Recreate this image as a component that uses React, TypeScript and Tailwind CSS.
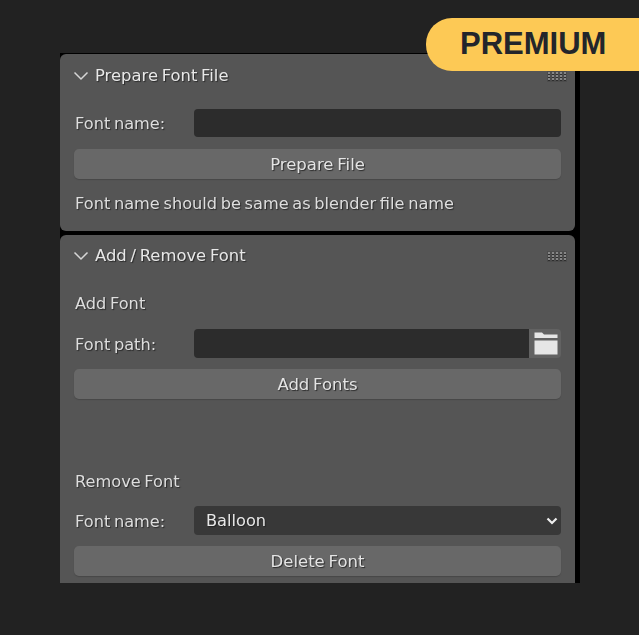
import React from "react";

const font = { fontFamily: '"DejaVu Sans", sans-serif' };

function Grip() {
  return (
    <svg width="20" height="11" viewBox="0 0 20 11" className="shrink-0">
      <rect x="0" y="0" width="20" height="11" fill="#4c4c4c" />
      {[0, 1, 2].map((r) =>
        [0, 1, 2, 3, 4].map((c) => (
          <g key={`${r}-${c}`}>
            <rect x={c * 4 + 1} y={r * 3 + 1} width="2" height="2" fill="#868686" />
            <rect x={c * 4 + 1} y={r * 3 + 3} width="2" height="1" fill="#2e2e2e" />
          </g>
        ))
      )}
    </svg>
  );
}

function Header({ title }: { title: string }) {
  return (
    <div className="-ml-[1px] -mr-[6px] flex h-[20px] items-center">
      <svg width="16" height="10" viewBox="0 0 16 10" className="mr-[6px] shrink-0" fill="none">
        <path d="M1.5 1.5 L8 8 L14.5 1.5" stroke="#d6d6d6" strokeWidth="1.5" />
      </svg>
      <span className="flex-1 text-[16.4px] leading-[20px] text-[#e8e8e8] [word-spacing:-1.5px] [text-shadow:1px_1px_1px_#2a2a2a]">{title}</span>
      <Grip />
    </div>
  );
}

function Label({ children }: { children: React.ReactNode }) {
  return <span className="ml-[1px] w-[119px] shrink-0 pt-[2px] text-[16.2px] leading-[20px] text-[#dedede] [word-spacing:-1.5px] [text-shadow:1px_1px_1px_#2a2a2a]">{children}</span>;
}

function Text({ children, className }: { children: React.ReactNode; className: string }) {
  return <div className={`ml-[1px] text-[16.2px] leading-[20px] text-[#dedede] [word-spacing:-1.5px] [text-shadow:1px_1px_1px_#2a2a2a] ${className}`}>{children}</div>;
}

function Btn({ children }: { children: React.ReactNode }) {
  return (
    <div className="flex h-[30px] items-center justify-center rounded-[5px] bg-[#686868] pt-[3px] text-[16.5px] text-[#e4e4e4] shadow-[0_1px_1px_#484848] [word-spacing:-1.5px] [text-shadow:1px_1px_1px_#2a2a2a]">
      {children}
    </div>
  );
}

export default function App() {
  return (
    <div style={font} className="relative h-[635px] w-[639px] overflow-hidden bg-[#222222] pl-[60px] pt-[53px]">
      <div className="flex h-[530px] w-[520px] flex-col gap-[4px] bg-black pr-[5px] pt-[1px] blur-[0.4px]">
        <section className="flex h-[177px] flex-col rounded-[6px] bg-[#555555] px-[14px] pt-[12px]">
          <Header title="Prepare Font File" />
          <div className="mt-[23px] flex h-[28px] items-center">
            <Label>Font name:</Label>
            <div className="h-[28px] flex-1 rounded-[4px] bg-[#2c2c2c]" />
          </div>
          <div className="mt-[12px]">
            <Btn>Prepare File</Btn>
          </div>
          <Text className="mt-[15px]">Font name should be same as blender file name</Text>
        </section>
        <section className="flex flex-1 flex-col rounded-t-[6px] bg-[#555555] px-[14px] pt-[11px]">
          <Header title="Add / Remove Font" />
          <Text className="mt-[28px]">Add Font</Text>
          <div className="mt-[15px] flex h-[29px] items-center">
            <Label>Font path:</Label>
            <div className="h-[29px] flex-1 rounded-l-[4px] bg-[#2c2c2c]" />
            <div className="flex h-[29px] w-[32px] items-center justify-center rounded-r-[4px] bg-[#626262] pl-[1px]">
              <svg width="24" height="23" viewBox="0 0 24 23">
                <path d="M0.5 0.5 H8 L10 2.5 H23.5 V6 H0.5 Z" fill="#e6e6e6" />
                <rect x="0.5" y="8.5" width="23" height="14" fill="#e6e6e6" />
              </svg>
            </div>
          </div>
          <div className="mt-[11px]">
            <Btn>Add Fonts</Btn>
          </div>
          <Text className="mt-[73px]">Remove Font</Text>
          <div className="mt-[14px] flex h-[29px] items-center">
            <Label>Font name:</Label>
            <div className="flex h-[29px] flex-1 items-center justify-between rounded-[4px] bg-[#383838] pl-[12px] pr-[3px]">
              <span className="pt-[2px] text-[16.2px] text-[#e8e8e8] [text-shadow:1px_1px_1px_#222222]">Balloon</span>
              <svg width="12" height="8" viewBox="0 0 12 8" fill="none">
                <path d="M1.5 1.5 L6 6 L10.5 1.5" stroke="#eeeeee" strokeWidth="2.2" />
              </svg>
            </div>
          </div>
          <div className="mt-[11px]">
            <Btn>Delete Font</Btn>
          </div>
        </section>
      </div>
      <div
        style={{ fontFamily: '"Liberation Sans", sans-serif' }}
        className="absolute left-[426px] top-[18px] flex h-[53px] w-[213px] items-center rounded-l-[26px] bg-[#fdc955] pl-[34px] text-[31px] font-bold text-[#23252b]"
      >
        PREMIUM
      </div>
    </div>
  );
}
